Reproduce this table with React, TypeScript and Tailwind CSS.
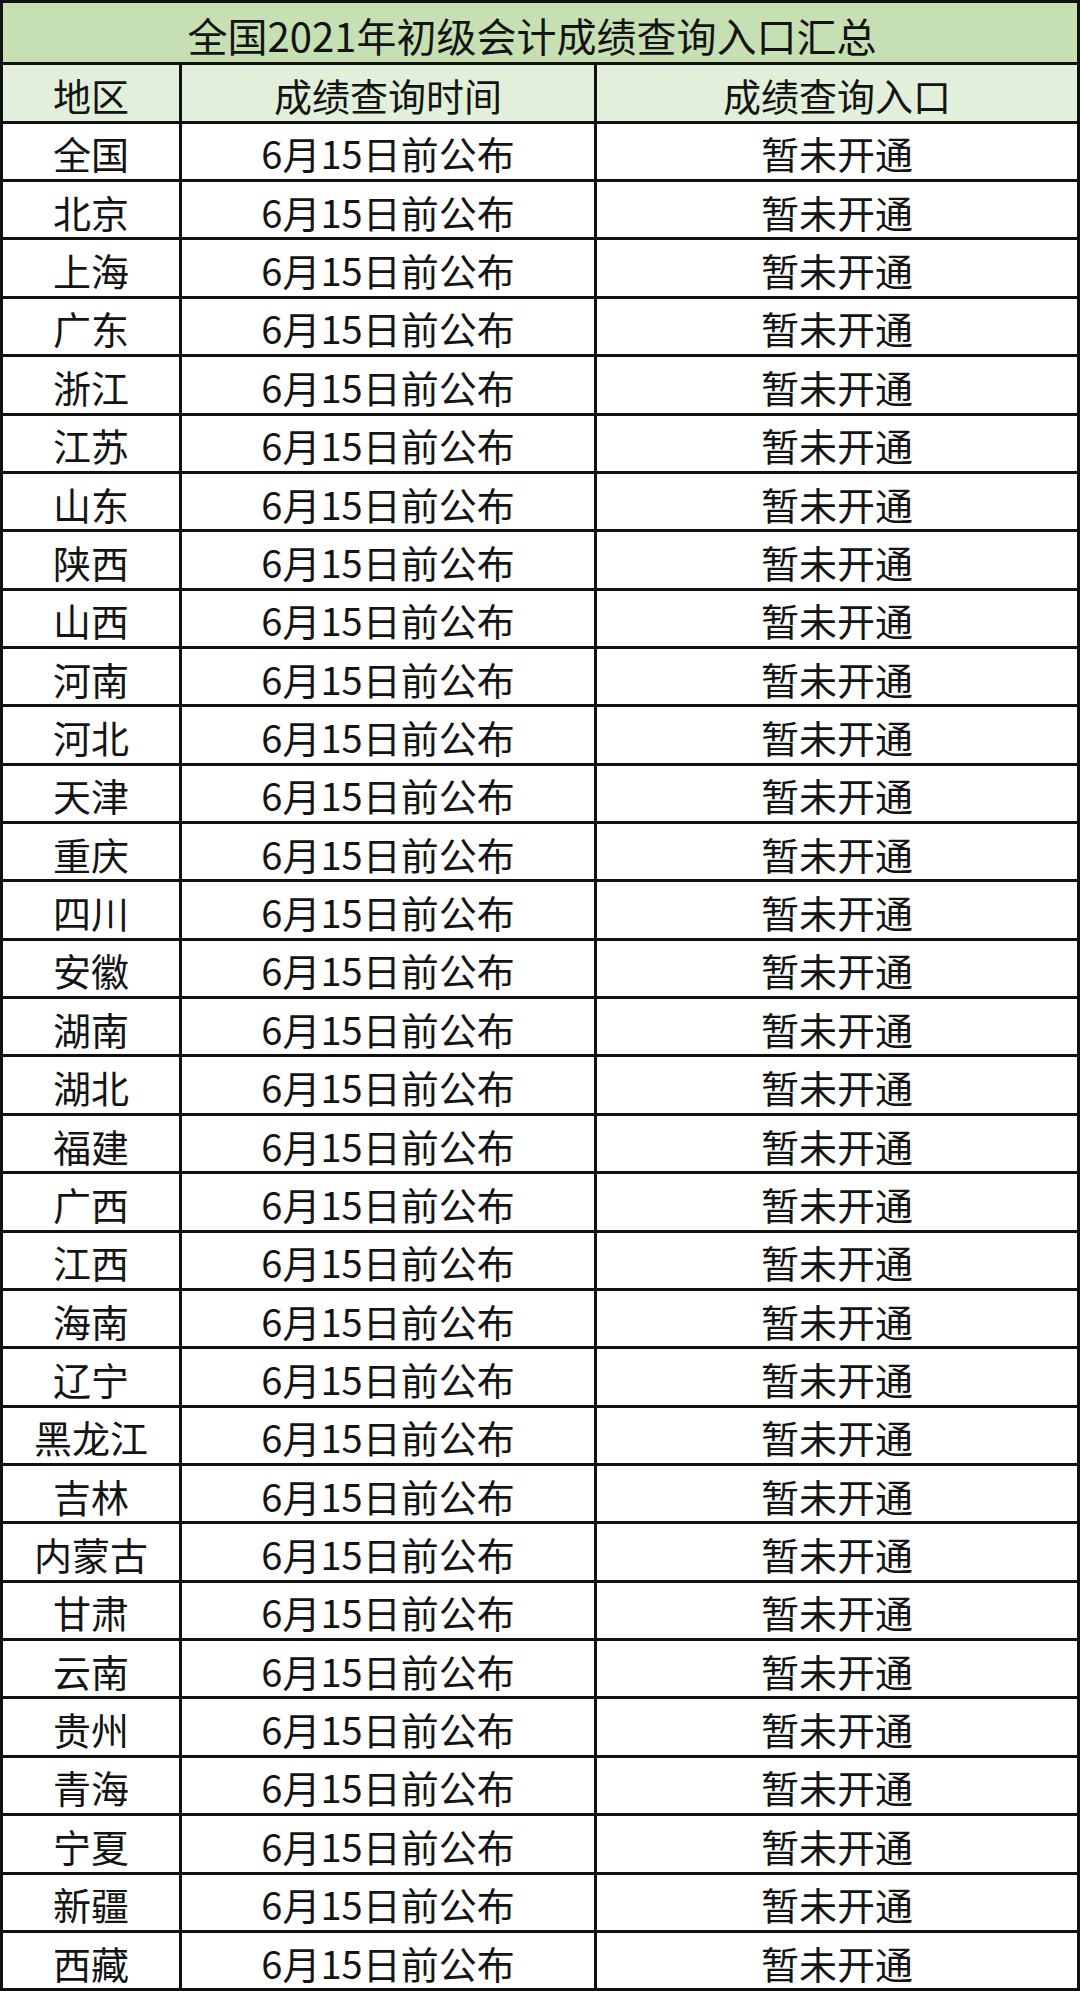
import React from 'react';

const regions = [
  '全国', '北京', '上海', '广东', '浙江', '江苏', '山东', '陕西', '山西', '河南', '河北',
  '天津', '重庆', '四川', '安徽', '湖南', '湖北', '福建', '广西', '江西', '海南', '辽宁',
  '黑龙江', '吉林', '内蒙古', '甘肃', '云南', '贵州', '青海', '宁夏', '新疆', '西藏',
];

const Row: React.FC<{ cells: string[]; bg?: string }> = ({ cells, bg = 'bg-white' }) => (
  <div className={`flex flex-1 border-t-[3px] border-[#111] ${bg}`}>
    <div className="w-[179px] flex items-center justify-center border-r-[3px] border-[#111] pt-[4px]">{cells[0]}</div>
    <div className="w-[415px] flex items-center justify-center border-r-[3px] border-[#111] pt-[4px]">{cells[1]}</div>
    <div className="flex-1 flex items-center justify-center pt-[4px]">{cells[2]}</div>
  </div>
);

export default function App() {
  return (
    <div
      className="w-[1080px] h-[1991px] flex flex-col border-[3px] border-[#111] text-[38px] leading-none text-[#141414]"
      style={{ fontFamily: '"Noto Sans CJK SC", "Noto Sans", sans-serif' }}
    >
      <div className="flex-1 flex items-center justify-center bg-[#c6e0b4] pt-[4px] pr-[16px] text-[40px]">
        全国2021年初级会计成绩查询入口汇总
      </div>
      <Row cells={['地区', '成绩查询时间', '成绩查询入口']} bg="bg-[#e2efda]" />
      {regions.map((r) => (
        <Row key={r} cells={[r, '6月15日前公布', '暂未开通']} />
      ))}
    </div>
  );
}
